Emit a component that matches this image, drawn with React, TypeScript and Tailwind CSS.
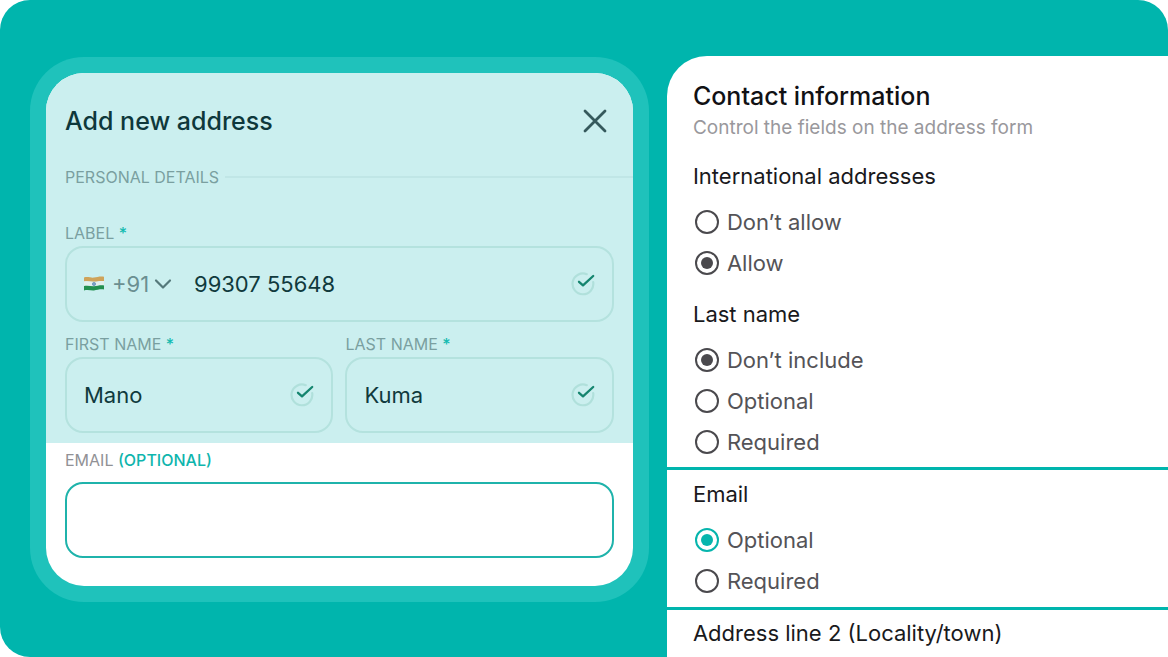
import React, { useState } from 'react';

interface TextFieldProps {
  id: string;
  label: string;
  value: string;
  onChange: (value: string) => void;
}

interface RadioGroupProps {
  name: string;
  title: string;
  options: string[];
  selected: string;
  onChange: (value: string) => void;
  highlighted?: boolean;
}

function CheckIcon() {
  return (
    <svg width="26" height="26" viewBox="0 0 26 26" fill="none" className="shrink-0" aria-hidden="true">
      <path
        d="M17.8 3.2A10.4 10.4 0 1 0 24.2 11.2"
        stroke="#b0e0db"
        strokeWidth="2.2"
        strokeLinecap="round"
      />
      <path d="M10 10.8L14 14.4L24.2 5" stroke="#15856f" strokeWidth="2.3" strokeLinecap="round" strokeLinejoin="round" />
    </svg>
  );
}

function CloseIcon() {
  return (
    <svg width="24" height="24" viewBox="0 0 24 24" fill="none" aria-hidden="true">
      <path d="M2 2L22 22M22 2L2 22" stroke="#35595c" strokeWidth="2.8" strokeLinecap="round" />
    </svg>
  );
}

function IndiaFlag() {
  return (
    <svg width="20" height="16" viewBox="0 0 20 16" className="shrink-0" aria-hidden="true">
      <path d="M0 1.4C4 .4 7 2 10 1.6C13 1.2 16 .2 20 .8V5C16 4.6 13 5.6 10 5.8C7 6 4 4.8 0 5.6Z" fill="#cfa35a" />
      <path d="M0 5.6C4 4.8 7 6 10 5.8C13 5.6 16 4.6 20 5V9.4C16 9 13 10 10 10.2C7 10.4 4 9.2 0 10Z" fill="#e2efee" />
      <path d="M0 10C4 9.2 7 10.4 10 10.2C13 10 16 9 20 9.4V13.4C16 13 13 14 10 14.4C7 14.6 4 13.6 0 14.4Z" fill="#23904f" />
      <circle cx="10" cy="8" r="1.6" fill="#7fa3c4" stroke="#4d7cab" strokeWidth=".6" />
    </svg>
  );
}

function TextField({ id, label, value, onChange }: TextFieldProps) {
  return (
    <div className="min-w-0">
      <label htmlFor={id} className="block text-base leading-5 text-[#7a9fa0]">
        {label} <span className="font-medium text-[#14bbb1]">*</span>
      </label>
      <div className="mt-[3px] flex h-[76px] items-center rounded-[18px] border-2 border-[#b4e2de] px-[17px]">
        <input
          id={id}
          type="text"
          value={value}
          onChange={(e) => onChange(e.target.value)}
          className="min-w-0 flex-1 bg-transparent text-[22px] text-[#103a3d] outline-none"
        />
        <CheckIcon />
      </div>
    </div>
  );
}

function AddressForm() {
  const [code, setCode] = useState('+91');
  const [phone, setPhone] = useState('99307 55648');
  const [firstName, setFirstName] = useState('Mano');
  const [lastName, setLastName] = useState('Kuma');
  const [email, setEmail] = useState('');

  return (
    <form className="overflow-hidden rounded-[38px] bg-white">
      <div className="bg-[#cbefef] pt-8 pb-[10px] pl-[19px]">
        <div className="flex items-center justify-between pr-[26px]">
          <h2 className="text-[25px] leading-8 font-medium text-[#0e383b]">Add new address</h2>
          <button type="button" aria-label="Close">
            <CloseIcon />
          </button>
        </div>

        <div className="mt-[30px] flex items-center gap-1.5">
          <h3 className="text-base leading-5 text-[#7a9fa0]">PERSONAL DETAILS</h3>
          <div className="h-[2px] flex-1 bg-[#c0e6e6]" />
        </div>

        <div className="mt-9 pr-[19px]">
          <label htmlFor="phone" className="block text-base leading-5 text-[#7a9fa0]">
            LABEL <span className="font-medium text-[#14bbb1]">*</span>
          </label>
          <div className="mt-[3px] flex h-[76px] items-center rounded-[18px] border-2 border-[#b4e2de] px-[17px]">
            <IndiaFlag />
            <div className="relative ml-2">
              <select
                aria-label="Country code"
                value={code}
                onChange={(e) => setCode(e.target.value)}
                className="w-[60px] appearance-none bg-transparent text-[22px] text-[#6b8f91] outline-none"
              >
                <option>+91</option>
                <option>+44</option>
              </select>
              <svg
                width="18"
                height="12"
                viewBox="0 0 18 12"
                fill="none"
                className="pointer-events-none absolute top-1/2 right-0 -translate-y-1/2"
                aria-hidden="true"
              >
                <path d="M2 2.5L9 9.5L16 2.5" stroke="#55797b" strokeWidth="2.2" strokeLinecap="round" strokeLinejoin="round" />
              </svg>
            </div>
            <input
              id="phone"
              type="tel"
              value={phone}
              onChange={(e) => setPhone(e.target.value)}
              className="ml-[22px] min-w-0 flex-1 bg-transparent text-[22px] text-[#103a3d] outline-none"
            />
            <CheckIcon />
          </div>

          <div className="mt-3 grid grid-cols-2 gap-3">
            <TextField id="first-name" label="FIRST NAME" value={firstName} onChange={setFirstName} />
            <TextField id="last-name" label="LAST NAME" value={lastName} onChange={setLastName} />
          </div>
        </div>
      </div>

      <div className="px-[19px] pt-[7px] pb-7">
        <label htmlFor="email" className="block text-base leading-5 text-[#919195]">
          EMAIL <span className="font-medium text-[#0fb5ad]">(OPTIONAL)</span>
        </label>
        <input
          id="email"
          type="email"
          value={email}
          onChange={(e) => setEmail(e.target.value)}
          className="mt-3 block h-[76px] w-full rounded-[18px] border-2 border-[#1fb3ab] bg-white px-[17px] text-[22px] text-[#103a3d] outline-none"
        />
      </div>
    </form>
  );
}

function RadioGroup({ name, title, options, selected, onChange, highlighted }: RadioGroupProps) {
  return (
    <fieldset>
      <legend className="text-[22px] leading-[30px] text-[#19191c]">{title}</legend>
      <div className="mt-4 space-y-[11px]">
        {options.map((option) => (
          <label key={option} className="flex items-center gap-2 pl-[2px] text-[22px] leading-[30px] text-[#545357]">
            <input
              type="radio"
              name={name}
              checked={selected === option}
              onChange={() => onChange(option)}
              className={`size-6 shrink-0 appearance-none rounded-full border-2 border-[#4a494d] bg-clip-content p-1 ${
                highlighted
                  ? 'checked:border-[#06b5ad] checked:bg-[#06b5ad]'
                  : 'checked:bg-[#4a494d]'
              }`}
            />
            {option}
          </label>
        ))}
      </div>
    </fieldset>
  );
}

function FieldSettings() {
  const [international, setInternational] = useState('Allow');
  const [lastName, setLastName] = useState('Don’t include');
  const [email, setEmail] = useState('Optional');

  return (
    <section className="rounded-tl-[40px] bg-white pt-6">
      <div className="space-y-[21px] px-[26px] pb-[10px]">
        <div>
          <h2 className="text-[25px] leading-8 font-medium text-[#111114]">Contact information</h2>
          <p className="mt-1 text-[19px] leading-6 text-[#99989c]">Control the fields on the address form</p>
        </div>
        <RadioGroup
          name="international"
          title="International addresses"
          options={['Don’t allow', 'Allow']}
          selected={international}
          onChange={setInternational}
        />
        <RadioGroup
          name="last-name-rule"
          title="Last name"
          options={['Don’t include', 'Optional', 'Required']}
          selected={lastName}
          onChange={setLastName}
        />
      </div>

      <div className="border-y-[3px] border-[#00b5ad] px-[26px] pt-[9px] pb-[11px]">
        <RadioGroup
          name="email-rule"
          title="Email"
          options={['Optional', 'Required']}
          selected={email}
          onChange={setEmail}
          highlighted
        />
      </div>

      <h3 className="px-[26px] pt-2 text-[22px] leading-[30px] text-[#19191c]">Address line 2 (Locality/town)</h3>
    </section>
  );
}

export default function App() {
  return (
    <div className="bg-white font-['Inter',sans-serif]">
      <main className="grid min-h-screen grid-cols-[21fr_17fr] gap-[18px] overflow-hidden rounded-t-[30px] rounded-bl-[30px] bg-[#00b5ad] pt-14 pl-[30px]">
        <div className="mt-px self-start rounded-[54px] bg-[#1fc2bb] p-4">
          <AddressForm />
        </div>
        <FieldSettings />
      </main>
    </div>
  );
}
